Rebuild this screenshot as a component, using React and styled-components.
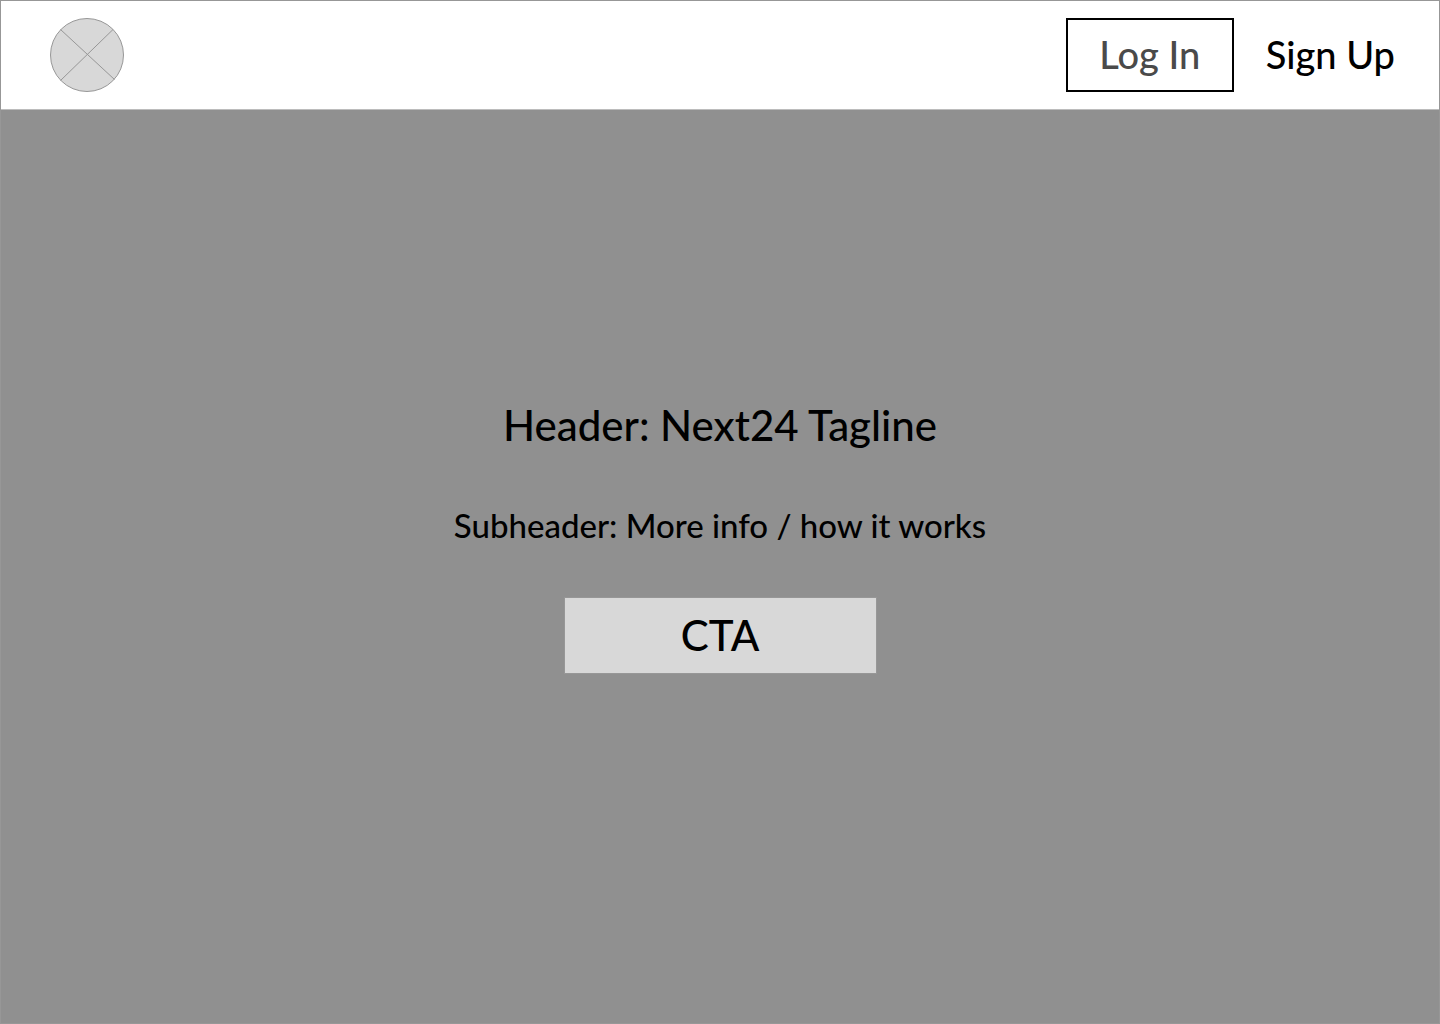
import React from "react";
import styled, { createGlobalStyle } from "styled-components";

const GlobalStyle = createGlobalStyle`
  *, *::before, *::after { box-sizing: border-box; }
  body { margin: 0; font-family: "Avenir Next", Lato, sans-serif; font-weight: 500; color: #000; }
`;

const Page = styled.div`
  min-height: 100vh;
  display: flex;
  flex-direction: column;
  border: 1px solid #979797;
  background: #909090;
`;

const TopBar = styled.header`
  display: flex;
  align-items: center;
  justify-content: space-between;
  padding: 17px 44px 17px 49px;
  background: #fff;
  border-bottom: 1px solid #bcbcbc;
`;

const HomeLink = styled.a`
  display: block;
  width: 74px;
  height: 74px;
`;

const Nav = styled.nav`
  display: flex;
  align-items: center;
  gap: 32px;
`;

const Button = styled.button`
  padding: 0 0 2px;
  border: 0;
  background: transparent;
  color: #000;
  font: inherit;
  cursor: pointer;
`;

const NavButton = styled(Button)`
  height: 74px;
  min-width: ${({ $outlined }) => ($outlined ? "168px" : "0")};
  border: ${({ $outlined }) => ($outlined ? "2px solid #000" : "0")};
  color: ${({ $outlined }) => ($outlined ? "#4a4a4a" : "#000")};
  font-size: 38px;
  line-height: 48px;
`;

const Hero = styled.main`
  flex: 1;
  display: flex;
  flex-direction: column;
  align-items: center;
  justify-content: center;
  padding-bottom: 62px;
  text-align: center;
`;

const Title = styled.h1`
  margin: 0 0 48px;
  font-size: 42px;
  line-height: 56px;
  font-weight: 500;
`;

const Subtitle = styled.p`
  margin: 0 0 48px;
  font-size: 33px;
  line-height: 48px;
`;

const CtaButton = styled(Button)`
  width: 313px;
  height: 77px;
  border: 1px solid #979797;
  background: #d8d8d8;
  font-size: 42px;
  line-height: 56px;
`;

function Logo() {
  return (
    <svg width="74" height="74" viewBox="0 0 74 74" fill="none" stroke="#979797" aria-hidden="true">
      <circle cx="37" cy="37" r="36.5" fill="#d8d8d8" />
      <path d="M10.5 11.5 64.5 61.5M63 11.5 10.5 62.5" />
    </svg>
  );
}

export default function App() {
  return (
    <>
      <GlobalStyle />
      <Page>
        <TopBar>
          <HomeLink href="#" aria-label="Home">
            <Logo />
          </HomeLink>
          <Nav>
            <NavButton $outlined>Log In</NavButton>
            <NavButton>Sign Up</NavButton>
          </Nav>
        </TopBar>
        <Hero>
          <Title>Header: Next24 Tagline</Title>
          <Subtitle>Subheader: More info / how it works</Subtitle>
          <CtaButton>CTA</CtaButton>
        </Hero>
      </Page>
    </>
  );
}
